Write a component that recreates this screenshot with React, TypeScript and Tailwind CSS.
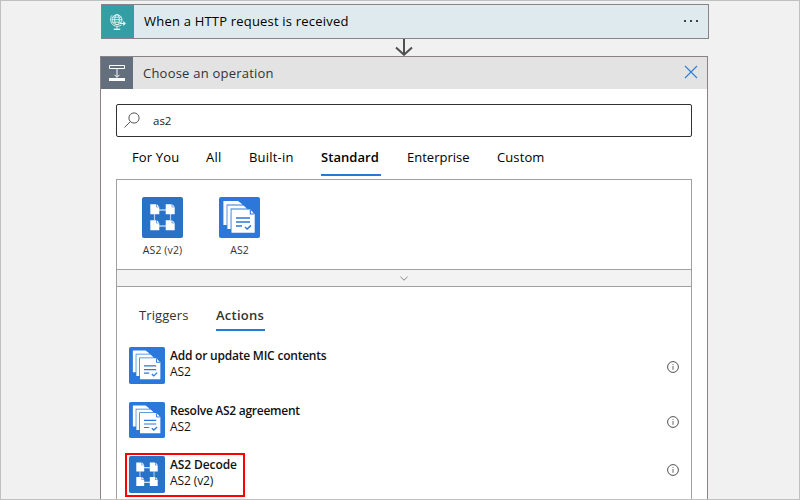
import type { ReactNode } from "react";

function DocStackIcon({ className }: { className: string }) {
  return (
    <svg viewBox="0 0 41 41" preserveAspectRatio="none" className={className}>
      <rect width="41" height="41" rx="2" fill="#2b78da" />
      <path d="M4.4 4H19L23 7V28H4.4Z" fill="#fff" />
      <path d="M7.6 7.6H24.5L30 12V32H7.6Z" fill="#2b78da" />
      <path d="M8.4 8.4H24.5L28.4 12V32H8.4Z" fill="#fff" />
      <path d="M11.6 11.6H32L36.5 16.2V36.5H11.6Z" fill="#2b78da" />
      <path d="M12.5 12.5H31.2L35.7 17.2V35.7H12.5Z" fill="#fff" />
      <path d="M31.3 13V17H35.2" fill="none" stroke="#2b78da" strokeWidth="1.1" />
      <path d="M17 21H31M17 25H31M17 29H23" stroke="#2b78da" strokeWidth="1.3" />
      <path d="M26 30L28.2 32L32 28.4" fill="none" stroke="#2b78da" strokeWidth="1.5" />
    </svg>
  );
}

function LinkedDocsIcon({ className }: { className: string }) {
  return (
    <svg viewBox="0 0 41 41" preserveAspectRatio="none" className={className}>
      <rect width="41" height="41" rx="2" fill="#2872c8" />
      <path d="M17 13H24M17 29H24" stroke="#fff" strokeWidth="1.2" />
      <path d="M12.5 17V23M28.5 17V23" stroke="#b5d0ee" strokeWidth="1.2" />
      {[[8.3, 7.2], [23.7, 7.2], [8.3, 23.2], [23.7, 23.2]].map(([x, y]) => (
        <g key={`${x}-${y}`} transform={`translate(${x} ${y})`}>
          <path d="M0 0H6V3.1H9V10H0Z" fill="#fff" />
          <path d="M6.6 0L9 2.5H6.6Z" fill="#fff" />
        </g>
      ))}
    </svg>
  );
}

function InfoIcon({ className }: { className: string }) {
  return (
    <svg viewBox="0 0 12 12" className={`mr-[12px] size-[12px] shrink-0 ${className}`}>
      <circle cx="6" cy="6" r="5.4" fill="none" stroke="#505050" strokeWidth="1" />
      <path d="M6 5V8.8M6 3.1V4.1" stroke="#666" strokeWidth="1" />
    </svg>
  );
}

function Row({ title, sub, icon, className, infoClass }: { title: ReactNode; sub: string; icon: ReactNode; className: string; infoClass: string }) {
  return (
    <div className={`flex shrink-0 items-start pl-[12px] ${className}`}>
      {icon}
      <div className="ml-[5px] flex-1 pt-[1px] text-[12px] leading-[16px] whitespace-nowrap text-[#111]">
        {title}
        <div className="tracking-[-0.1px]">{sub}</div>
      </div>
      <InfoIcon className={infoClass} />
    </div>
  );
}

export default function App() {
  return (
    <div className="flex h-[500px] w-[800px] flex-col overflow-hidden border border-[#c0c0c0] bg-[#f1f1f1] pt-[3px] font-['Open_Sans','Noto_Sans',sans-serif] text-black">
      <div className="ml-[100px] flex h-[35px] w-[608px] shrink-0 border border-[#8a8385] bg-[#dfeaef]">
        <div className="flex w-[32px] items-center justify-center bg-[#349ea5]">
          <svg viewBox="0 0 18 18" className="size-[18px]" fill="none" stroke="#e8f6f6" strokeWidth="0.9">
            <circle cx="8" cy="6.7" r="5" />
            <ellipse cx="8" cy="6.7" rx="2.3" ry="5" />
            <path d="M3 6.7H13M3.7 4.2H12.3M3.7 9.2H12.3M3 2.3C.8 5 1.2 10 4.4 12.2C7.2 14 10.5 13.7 12.5 11.8M8 13.3V16" />
            <path d="M4.8 16.3H11.2" strokeWidth="1.4" />
            <path d="M11 10.5H16M14.2 8.7L16 10.5L14.2 12.3" strokeWidth="1.2" />
          </svg>
        </div>
        <div className="ml-[10px] flex-1 text-[13px] leading-[32px] tracking-[0.2px] whitespace-nowrap">When a HTTP request is received</div>
        <div className="mt-[15px] mr-[10px] flex gap-[4px]">
          <i className="h-[2px] w-[2px] bg-[#444]" />
          <i className="h-[2px] w-[2px] bg-[#444]" />
          <i className="h-[2px] w-[2px] bg-[#444]" />
        </div>
      </div>
      <svg viewBox="0 0 18 17" className="ml-[394px] h-[17px] w-[18px] shrink-0" fill="none" stroke="#505050" strokeWidth="2">
        <path d="M9 0V15.5M1 8.5L9 15.8L17 8.5" />
      </svg>
      <div className="ml-[99px] flex h-[460px] w-[608px] shrink-0 flex-col border border-[#8a8385] bg-white">
        <div className="flex h-[32px] shrink-0 items-center bg-[#e3e3e3]">
          <div className="flex h-[32px] w-[32px] items-center justify-center bg-[#646f7d]">
            <svg viewBox="0 0 16 16" className="size-[16px]" fill="none" stroke="#fff">
              <path d="M.5 .5H15.5V3.5H.5Z" strokeWidth="1" />
              <path d="M8 4V12M5.5 9.8L8 12.3L10.5 9.8" strokeWidth="1" />
              <path d="M0 14.5H16" strokeWidth="3" />
            </svg>
          </div>
          <div className="ml-[10px] flex-1 pt-[2px] text-[13px] tracking-[0.22px] text-[#333]">Choose an operation</div>
          <svg viewBox="0 0 14 14" className="mr-[9px] mb-[2px] size-[14px]" stroke="#2b7fd8" strokeWidth="1.1">
            <path d="M1 1L13 13M13 1L1 13" />
          </svg>
        </div>
        <div className="mt-[15px] ml-[15px] flex h-[33px] w-[576px] shrink-0 items-center rounded-[2px] border border-[#323130] bg-white pl-[7px]">
          <svg viewBox="0 0 16 16" className="mb-[1px] size-[16px]" fill="none" stroke="#555" strokeWidth="1">
            <circle cx="10" cy="6" r="5.1" />
            <path d="M6.4 9.6L.5 15.4" />
          </svg>
          <span className="ml-[13px] text-[11.5px] text-[#222]">as2</span>
        </div>
        <div className="ml-[31px] flex h-[42px] shrink-0 items-start pb-[3px] text-[13px] leading-[18px] whitespace-nowrap">
          <span className="mt-[11px] w-[74px] tracking-[0.15px]">For You</span>
          <span className="mt-[11px] w-[43px] tracking-[0.2px]">All</span>
          <span className="mt-[11px] w-[72px] tracking-[0.2px]">Built-in</span>
          <span className="mr-[26px] h-[39px] w-[60px] border-b-2 border-[#2878d4] pt-[11px] font-semibold tracking-[0.05px]">Standard</span>
          <span className="mt-[11px] w-[90px]">Enterprise</span>
          <span className="mt-[11px] tracking-[0.1px]">Custom</span>
        </div>
        <div className="ml-[15px] flex h-[91px] w-[576px] shrink-0 border border-[#a0a0a0] pt-[17px] pl-[7px] text-[10.5px] leading-[14px] text-[#333]">
          <div className="flex w-[77px] flex-col items-center gap-[5px]">
            <LinkedDocsIcon className="size-[41px]" />
            <span className="tracking-[0.1px]">AS2 (v2)</span>
          </div>
          <div className="flex w-[77px] flex-col items-center gap-[5px]">
            <DocStackIcon className="size-[41px]" />
            <span>AS2</span>
          </div>
        </div>
        <div className="ml-[15px] flex h-[16px] w-[576px] shrink-0 items-center justify-center border-x border-[#a0a0a0] bg-[#f3f3f3]">
          <svg viewBox="0 0 8 5" className="h-[5px] w-[8px]" fill="none" stroke="#888">
            <path d="M.4 .7L4 4.2L7.6 .7" />
          </svg>
        </div>
        <div className="ml-[15px] flex h-[240px] w-[576px] shrink-0 flex-col border border-[#a0a0a0]">
          <div className="ml-[22px] flex h-[44px] shrink-0 text-[13px] leading-[18px] text-[#333]">
            <span className="mt-[19px] w-[77px] tracking-[0.1px]">Triggers</span>
            <span className="w-[49px] border-b-2 border-[#2878d4] pt-[19px] font-semibold tracking-[0.25px]">Actions</span>
          </div>
          <Row className="mt-[16px] h-[37px]" infoClass="mt-[14px]" title={<div className="font-semibold tracking-[-0.22px]">Add or update MIC contents</div>} sub="AS2" icon={<DocStackIcon className="h-[37px] w-[36px]" />} />
          <Row className="mt-[18px] h-[36px]" infoClass="mt-[14px]" title={<div className="font-semibold tracking-[-0.27px]">Resolve AS2 agreement</div>} sub="AS2" icon={<DocStackIcon className="h-[36px] w-[36px]" />} />
          <div className="relative mt-[18px]">
            <Row className="h-[37px]" infoClass="mt-[8px]" title={<div className="font-semibold tracking-[-0.1px]">AS2 Decode</div>} sub="AS2 (v2)" icon={<LinkedDocsIcon className="h-[37px] w-[36px]" />} />
            <div className="absolute top-[-3px] left-[8px] h-[44px] w-[120px] border-2 border-[#ff0000]" />
          </div>
        </div>
      </div>
      <div className="relative z-10 mt-[-21px] h-px" />
    </div>
  );
}
